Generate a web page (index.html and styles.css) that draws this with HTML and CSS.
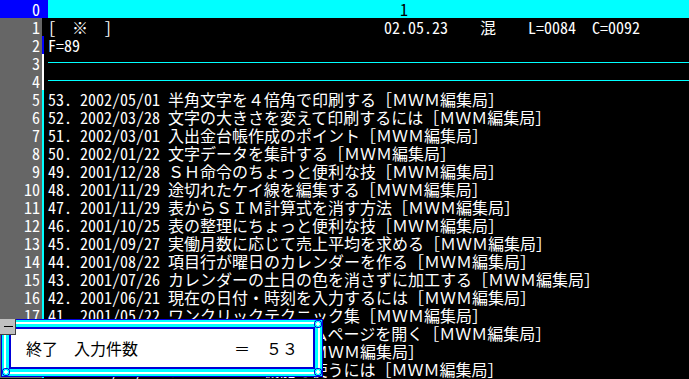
FILE: index.html
```html
<!DOCTYPE html>
<html lang="ja">
<head>
    <meta charset="UTF-8">
    <title>MWM記事一覧</title>
    <link rel="stylesheet" href="styles.css">
</head>
<body>
    <div class="screen">
        <div class="row ruler">
            <span class="num">0</span>
            <span class="text hw"><span class="ruler-mark">1</span></span>
        </div>
        <div class="row">
            <span class="num">1</span><span class="mark"></span>
            <span class="text hw">[  ※  ]<span class="date">02.05.23</span><span class="mode">混</span><span class="pos">L=0084</span><span class="pos col">C=0092</span></span>
        </div>
        <div class="row">
            <span class="num">2</span><span class="mark blue"></span>
            <span class="text hw">F=89</span>
        </div>
        <div class="row">
            <span class="num">3</span><span class="mark white"></span>
            <span class="text rule"></span>
        </div>
        <div class="row">
            <span class="num">4</span><span class="mark white"></span>
            <span class="text rule"></span>
        </div>
        <div class="row">
            <span class="num">5</span><span class="mark cyan"></span>
            <span class="text"><span class="hw">53. 2002/05/01 </span>半角文字を４倍角で印刷する［ＭＷＭ編集局］</span>
        </div>
        <div class="row">
            <span class="num">6</span><span class="mark cyan"></span>
            <span class="text"><span class="hw">52. 2002/03/28 </span>文字の大きさを変えて印刷するには［ＭＷＭ編集局］</span>
        </div>
        <div class="row">
            <span class="num">7</span><span class="mark cyan"></span>
            <span class="text"><span class="hw">51. 2002/03/01 </span>入出金台帳作成のポイント［ＭＷＭ編集局］</span>
        </div>
        <div class="row">
            <span class="num">8</span><span class="mark cyan"></span>
            <span class="text"><span class="hw">50. 2002/01/22 </span>文字データを集計する［ＭＷＭ編集局］</span>
        </div>
        <div class="row">
            <span class="num">9</span><span class="mark cyan"></span>
            <span class="text"><span class="hw">49. 2001/12/28 </span>ＳＨ命令のちょっと便利な技［ＭＷＭ編集局］</span>
        </div>
        <div class="row">
            <span class="num">10</span><span class="mark cyan"></span>
            <span class="text"><span class="hw">48. 2001/11/29 </span>途切れたケイ線を編集する［ＭＷＭ編集局］</span>
        </div>
        <div class="row">
            <span class="num">11</span><span class="mark cyan"></span>
            <span class="text"><span class="hw">47. 2001/11/29 </span>表からＳＩＭ計算式を消す方法［ＭＷＭ編集局］</span>
        </div>
        <div class="row">
            <span class="num">12</span><span class="mark cyan"></span>
            <span class="text"><span class="hw">46. 2001/10/25 </span>表の整理にちょっと便利な技［ＭＷＭ編集局］</span>
        </div>
        <div class="row">
            <span class="num">13</span><span class="mark cyan"></span>
            <span class="text"><span class="hw">45. 2001/09/27 </span>実働月数に応じて売上平均を求める［ＭＷＭ編集局］</span>
        </div>
        <div class="row">
            <span class="num">14</span><span class="mark cyan"></span>
            <span class="text"><span class="hw">44. 2001/08/22 </span>項目行が曜日のカレンダーを作る［ＭＷＭ編集局］</span>
        </div>
        <div class="row">
            <span class="num">15</span><span class="mark cyan"></span>
            <span class="text"><span class="hw">43. 2001/07/26 </span>カレンダーの土日の色を消さずに加工する［ＭＷＭ編集局］</span>
        </div>
        <div class="row">
            <span class="num">16</span><span class="mark cyan"></span>
            <span class="text"><span class="hw">42. 2001/06/21 </span>現在の日付・時刻を入力するには［ＭＷＭ編集局］</span>
        </div>
        <div class="row">
            <span class="num">17</span><span class="mark cyan"></span>
            <span class="text"><span class="hw">41. 2001/05/22 </span>ワンクリックテクニック集［ＭＷＭ編集局］</span>
        </div>
        <div class="row">
            <span class="num">18</span><span class="mark cyan"></span>
            <span class="text"><span class="hw">40. 2001/04/25 </span>マクロボタンでホームページを開く［ＭＷＭ編集局］</span>
        </div>
        <div class="row">
            <span class="num">19</span><span class="mark cyan"></span>
            <span class="text"><span class="hw">39. 2001/03/28 </span>シートを保護する［ＭＷＭ編集局］</span>
        </div>
        <div class="row">
            <span class="num">20</span><span class="mark cyan"></span>
            <span class="text"><span class="hw">38. 2001/02/27 </span>テンプレート機能を使うには［ＭＷＭ編集局］</span>
        </div>

        <div class="dialog">
            <span class="sysbox"></span>
            <span class="dot tl"></span>
            <span class="dot tr"></span>
            <span class="dot bl"></span>
            <span class="dot br"></span>
            <div class="message">終了　入力件数　　　　　　＝　５３</div>
        </div>
    </div>
</body>
</html>
```

FILE: styles.css
```css
body {
    margin: 0;
    background: #000;
    color: #fff;
    font-family: "Noto Sans CJK JP", sans-serif;
    font-size: 16px;
    line-height: 18px;
}

/* half-width latin, like the old terminal font */
.hw,
.num {
    font-feature-settings: "hwid" 1;
}

.screen {
    position: relative;
    width: 689px;
    height: 379px;
    overflow: hidden;
}

.row {
    display: flex;
    height: 18px;
}

.num {
    width: 40px;
    padding-right: 2px;
    background: #666666;
    text-align: right;
}

.mark {
    width: 2px;
    margin-right: 4px;
}

.mark.blue {
    background: #0000ff;
}

.mark.white {
    background: #ffffff;
}

.mark.cyan {
    background: #00ffff;
}

.text {
    flex: 1;
    white-space: pre;
}

.ruler .num {
    background: #0000ff;
    padding-right: 8px;
}

.ruler .text {
    background: #00ffff;
    color: #000;
}

.ruler-mark {
    margin-left: 352px;
}

.date {
    margin-left: 272px;
}

.mode {
    margin-left: 32px;
}

.pos {
    margin-left: 32px;
}

.pos.col {
    margin-left: 16px;
}

.text.rule {
    background: linear-gradient(#00ffff, #00ffff) no-repeat 0 8px / 100% 1px;
}

.dialog {
    position: absolute;
    left: 1px;
    top: 319px;
    width: 322px;
    height: 58px;
    box-sizing: border-box;
    padding: 19px 0 0 24px;
    border: 1px solid #0000d8;
    background: #fff;
    box-shadow: inset 0 0 0 2px #00ffff, inset 0 0 0 4px #fff, inset 0 0 0 7px #00ffff, inset 0 0 0 9px #0000d8;
    color: #000;
}

.message {
    white-space: pre;
}

.dot {
    position: absolute;
    width: 8px;
    height: 8px;
    border-radius: 50%;
    background: radial-gradient(circle, #fff 0 1.5px, #00ffff 2px 3px, #0000d8 3.5px);
}

.dot.tl { left: 0; top: 0; }
.dot.tr { right: 0; top: 0; }
.dot.bl { left: 0; bottom: 0; }
.dot.br { right: 0; bottom: 0; }

.sysbox {
    position: absolute;
    left: -2px;
    top: -1px;
    width: 15px;
    height: 15px;
    background: #c0c0c0;
    border-right: 1px solid #404040;
    border-bottom: 1px solid #404040;
    z-index: 1;
}

.sysbox::before {
    content: "";
    position: absolute;
    left: 4px;
    top: 7px;
    width: 9px;
    height: 1px;
    background: #000;
}
```
